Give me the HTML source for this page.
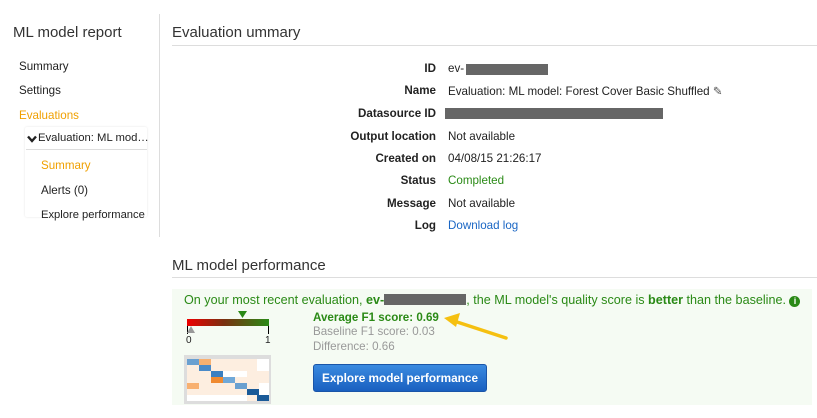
<!DOCTYPE html>
<html><head><style>
body{margin:0;width:817px;height:418px;background:#fff;font-family:"Liberation Sans",sans-serif;font-size:11.6px;color:#222;position:relative;overflow:hidden}
.a{position:absolute;white-space:nowrap}
.lbl{position:absolute;right:381px;font-weight:bold;text-align:right}
.val{position:absolute;left:448px}
.bar{background:#666;height:11px;position:absolute}
.g{color:#2a8a16}
</style></head><body>
<div class="a" style="left:13px;top:24px;font-size:15px;color:#333">ML model report</div>
<div class="a" style="left:19px;top:60px">Summary</div>
<div class="a" style="left:19px;top:84px">Settings</div>
<div class="a" style="left:19px;top:109px;color:#f0a000">Evaluations</div>
<div style="position:absolute;left:25px;top:127px;width:122px;height:90px;box-shadow:0 0 2px #e4e4e4;border-radius:2px"></div>
<svg style="position:absolute;left:27px;top:135px" width="10" height="8"><path d="M1 1.5 L5 6 L9 1.5" stroke="#222" stroke-width="2.4" fill="none"/></svg>
<div class="a" style="left:38px;top:132px;font-size:11.3px">Evaluation: ML mod…</div>
<div style="position:absolute;left:26px;top:149px;width:121px;border-top:1px solid #ddd"></div>
<div class="a" style="left:41px;top:159px;color:#f0a000">Summary</div>
<div class="a" style="left:41px;top:184px">Alerts (0)</div>
<div class="a" style="left:41px;top:209px;font-size:11.2px">Explore performance</div>
<div style="position:absolute;left:159px;top:14px;height:223px;border-left:1px solid #ddd"></div>

<div class="a" style="left:172px;top:24px;font-size:15px;color:#333">Evaluation ummary</div>
<div style="position:absolute;left:172px;top:45px;width:645px;border-top:1px solid #ddd"></div>
<div class="lbl" style="top:62px">ID</div><div class="val a" style="top:62px">ev-</div><div class="bar" style="left:466px;top:64px;width:82px"></div>
<div class="lbl" style="top:84px">Name</div><div class="val a" style="top:84px">Evaluation: ML model: Forest Cover Basic Shuffled <span style="color:#555">✎</span></div>
<div class="lbl" style="top:107px">Datasource ID</div><div class="bar" style="left:445px;top:108px;width:218px"></div>
<div class="lbl" style="top:130px">Output location</div><div class="val a" style="top:130px">Not available</div>
<div class="lbl" style="top:152px">Created on</div><div class="val a" style="top:152px">04/08/15 21:26:17</div>
<div class="lbl" style="top:174px">Status</div><div class="val a g" style="top:174px">Completed</div>
<div class="lbl" style="top:197px">Message</div><div class="val a" style="top:197px">Not available</div>
<div class="lbl" style="top:219px">Log</div><div class="val a" style="top:219px;color:#1a66c4">Download log</div>

<div class="a" style="left:172px;top:257px;font-size:15px;color:#333">ML model performance</div>
<div style="position:absolute;left:172px;top:277px;width:645px;border-top:1px solid #ddd"></div>
<div style="position:absolute;left:172px;top:289px;width:640px;height:116px;background:#f5fbf3"></div>
<div class="a g" style="left:184px;top:293px;font-size:12.6px">On your most recent evaluation, <b>ev-</b><span style="display:inline-block;width:82px;height:11px;background:#666;vertical-align:-1px"></span>, the ML model's quality score is <b>better</b> than the baseline. <span style="display:inline-block;width:11px;height:11px;border-radius:50%;background:#2a8a16;color:#fff;font-size:9px;text-align:center;line-height:11px;font-weight:bold">i</span></div>
<div style="position:absolute;left:187px;top:319px;width:82px;height:7px;background:linear-gradient(90deg,#e00,#7a3010 45%,#2a8a16)"></div>
<svg style="position:absolute;left:238px;top:311px" width="10" height="8"><path d="M0 0 H9 L4.5 7Z" fill="#2a8a16"/></svg>
<div style="position:absolute;left:187px;top:326px;height:8px;border-left:1px solid #000"></div>
<div style="position:absolute;left:268px;top:326px;height:8px;border-left:1px solid #000"></div>
<svg style="position:absolute;left:187px;top:326px" width="8" height="7"><path d="M0 7 L4 0 L8 7Z" fill="#999"/></svg>
<div class="a" style="left:186px;top:335px;font-size:10px">0</div>
<div class="a" style="left:265px;top:335px;font-size:10px">1</div>
<div style="position:absolute;left:184px;top:355px;width:87px;height:49px;background:#ddd"></div>
<svg style="position:absolute;left:187px;top:359px" width="82" height="42">
<rect width="82" height="42" fill="#fdeee0"/>
<rect x="0" y="0" width="12" height="6" fill="#6aa0d0"/><rect x="12" y="0" width="12" height="6" fill="#f8b070"/>
<rect x="12" y="6" width="12" height="6" fill="#4a8ac8"/><rect x="24" y="12" width="12" height="6" fill="#3a7fc0"/>
<rect x="24" y="18" width="12" height="6" fill="#f08a30"/><rect x="36" y="18" width="12" height="6" fill="#70a8d8"/>
<rect x="0" y="24" width="12" height="6" fill="#f8b070"/><rect x="48" y="24" width="12" height="6" fill="#6aa0d0"/>
<rect x="60" y="30" width="12" height="6" fill="#1a5a98"/><rect x="70" y="36" width="12" height="6" fill="#1a5a98"/>
<rect x="70" y="0" width="12" height="12" fill="#fff"/><rect x="36" y="12" width="24" height="6" fill="#fff"/>
<rect x="0" y="36" width="60" height="6" fill="#fff"/><rect x="72" y="24" width="10" height="12" fill="#fff"/>
</svg>
<div class="a g" style="left:313px;top:311px;font-weight:bold">Average F1 score: 0.69</div>
<div class="a" style="left:313px;top:325px;color:#999">Baseline F1 score: 0.03</div>
<div class="a" style="left:313px;top:340px;color:#999">Difference: 0.66</div>
<div class="a" style="left:313px;top:364px;width:172px;height:26px;background:linear-gradient(#3a8ae0,#1a60c0);border:1px solid #1a55a8;border-radius:3px;color:#fff;font-weight:bold;font-size:11.8px;text-align:center;line-height:26px">Explore model performance</div>
<svg style="position:absolute;left:440px;top:308px" width="70" height="35"><line x1="66" y1="30" x2="14" y2="13" stroke="#f5c010" stroke-width="3.5" stroke-linecap="round"/><polygon points="4,10 20,5 16,19" fill="#f5c010"/></svg>
</body></html>
